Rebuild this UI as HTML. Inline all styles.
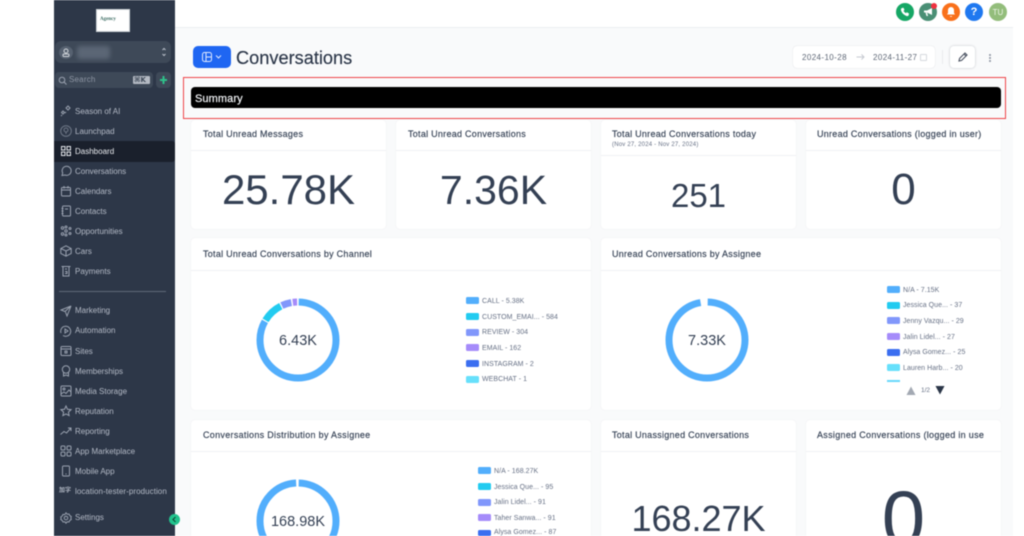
<!DOCTYPE html>
<html lang="en"><head><meta charset="utf-8"><title>Conversations</title>
<style>
*{box-sizing:border-box}
html,body{margin:0;padding:0;width:1024px;height:536px;overflow:hidden;background:#fff;font-family:"Liberation Sans",sans-serif}
#w{position:absolute;left:0;top:0;width:1024px;height:536px;overflow:hidden;filter:blur(.45px);background:#fff}
.a{position:absolute}
.t{position:absolute;white-space:nowrap}
.nav{position:absolute;left:75px;margin-top:1px;font-size:8px;line-height:10px;color:#b4bac6;letter-spacing:0;white-space:nowrap}
.ic{position:absolute;left:60px;width:12px;height:12px;fill:none;stroke:#9aa2b0;stroke-width:1}
.card{position:absolute;background:#fff;border-radius:4px;box-shadow:0 0 1px rgba(16,24,40,.1);overflow:hidden}
.hd{position:absolute;left:12px;font-size:9px;line-height:11px;font-weight:400;color:#344054;letter-spacing:.27px;white-space:nowrap;-webkit-text-stroke:.15px #344054}
.ln{position:absolute;left:0;right:0;height:1px;background:#f0f1f4}
.big{position:absolute;left:0;right:0;text-align:center;color:#344054;white-space:nowrap}
.lg{position:absolute;margin-top:1px;font-size:7px;line-height:9px;color:#667085;letter-spacing:.05px;white-space:nowrap}
.sw{position:absolute;width:13px;height:7px;border-radius:1.5px}
.dot{position:absolute;top:3px;width:18px;height:18px;border-radius:50%}
</style></head><body><div id="w">

<div class="a" style="left:175px;top:0;width:838px;height:536px;background:#f9fafb"></div>
<div class="a" style="left:175px;top:0;width:838px;height:28px;background:#fff;border-bottom:1px solid #eceef1"></div>

<!-- sidebar -->
<div class="a" style="left:54px;top:0;width:121px;height:536px;background:#2d3748"></div>
<div class="a" style="left:96px;top:9px;width:34px;height:23px;background:#fff;border:1px solid #cfd3d8"></div>
<div class="t" style="left:100px;top:16px;font:bold 5px/7px 'Liberation Serif',serif;color:#3b6b62">Agency</div>
<div class="a" style="left:55px;top:41px;width:116px;height:22px;border-radius:6px;background:#3e4958"></div>
<div class="a" style="left:59px;top:46px;width:14px;height:13px;border-radius:50%;background:#566170"></div>
<svg class="a" style="left:61px;top:47px" width="10" height="11" viewBox="0 0 10 11" fill="none" stroke="#d3d7dc" stroke-width="1"><circle cx="5" cy="4" r="2"/><rect x="2" y="7" width="6" height="2.5" rx="1"/></svg>
<div class="a" style="left:77px;top:46px;width:33px;height:13px;border-radius:3px;background:#5b6675;filter:blur(2px)"></div>
<svg class="a" style="left:160px;top:46px" width="8" height="12" viewBox="0 0 8 12" fill="none" stroke="#b9bfc9"><path d="M2.500 4L4 2.500 5.500 4M2.500 8L4 9.500 5.500 8"/></svg>
<div class="a" style="left:55px;top:72px;width:98px;height:16px;border-radius:4px;background:#3e4958"></div>
<svg class="a" style="left:58px;top:76px" width="9" height="9" viewBox="0 0 9 9" fill="none" stroke="#9aa2b0"><circle cx="4" cy="4" r="2.800"/><path d="M6 6l2.500 2.500"/></svg>
<div class="t" style="left:69px;top:75px;font-size:8px;line-height:10px;color:#8d95a3;letter-spacing:.2px">Search</div>
<div class="a" style="left:133px;top:76px;width:17px;height:8px;border-radius:1px;background:#b4bac3"></div>
<div class="t" style="left:134px;top:76px;font:bold 7px/8px 'DejaVu Sans',sans-serif;color:#3e4958">⌘K</div>
<div class="a" style="left:156px;top:72px;width:15px;height:16px;border-radius:4px;background:#3e4958"></div>
<svg class="a" style="left:159px;top:76px" width="9" height="8" viewBox="0 0 9 8"><path d="M3.500 0h2v3H8v2H5.500v3h-2V5H1V3h2.500z" fill="#2fc08a"/></svg>

<div class="a" style="left:54px;top:141px;width:121px;height:21px;background:#1a202c;border-radius:0 3px 3px 0"></div>

<svg class="ic" style="top:105px" viewBox="0 0 12 12"><path d="M8 1l2 2-2 2-2-2zM3 6l1.500 1.500L3 9 1.500 7.500zM1 11l1-1M6 7l-1 1"/></svg><div class="nav" style="top:106px">Season of AI</div>
<svg class="ic" style="top:125px;opacity:.6" viewBox="0 0 12 12"><circle cx="6" cy="6" r="5.300"/><circle cx="6" cy="5" r="2"/><path d="M6 7v2"/></svg><div class="nav" style="top:126px">Launchpad</div>
<svg class="ic" style="top:145px;stroke:#e2e5ea" viewBox="0 0 12 12"><rect x="1.500" y="1.500" width="3.500" height="3.500"/><rect x="7" y="1.500" width="3.500" height="3.500"/><rect x="1.500" y="7" width="3.500" height="3.500"/><rect x="7" y="7" width="3.500" height="3.500"/></svg><div class="nav" style="top:146px;color:#e8eaee">Dashboard</div>
<svg class="ic" style="top:165px" viewBox="0 0 12 12"><path d="M2 10.500l.7-2.500A4.500 4.500 0 1 1 5 10z"/></svg><div class="nav" style="top:166px">Conversations</div>
<svg class="ic" style="top:185px" viewBox="0 0 12 12"><rect x="1.500" y="2.500" width="9" height="8.500" rx="1"/><path d="M1.500 5h9M4 1v2.500M8 1v2.500"/></svg><div class="nav" style="top:186px">Calendars</div>
<svg class="ic" style="top:205px" viewBox="0 0 12 12"><rect x="2.500" y="1" width="8" height="10" rx="1"/><path d="M1.500 3.500h2M1.500 6h2M1.500 8.500h2M5 4h3"/></svg><div class="nav" style="top:206px">Contacts</div>
<svg class="ic" style="top:225px" viewBox="0 0 12 12"><circle cx="2.500" cy="3" r="1.200"/><circle cx="6" cy="6" r="1.200"/><circle cx="2.500" cy="9" r="1.200"/><circle cx="6" cy="2" r="1"/><circle cx="6" cy="10" r="1"/><circle cx="10" cy="3.500" r="1"/><circle cx="10" cy="8.500" r="1"/></svg><div class="nav" style="top:226px">Opportunities</div>
<svg class="ic" style="top:245px" viewBox="0 0 12 12"><path d="M6 .8l5.200 2.700v5L6 11.200.8 8.500v-5zM.8 3.500L6 6l5.200-2.500M6 6v5.200"/></svg><div class="nav" style="top:246px">Cars</div>
<svg class="ic" style="top:265px" viewBox="0 0 12 12"><path d="M1.500 1.500h9M3 1.500V11h6V1.500M5 4h2M5 6.500h2v2H5"/></svg><div class="nav" style="top:266px">Payments</div>

<div class="a" style="left:59px;top:291px;width:107px;height:1px;background:#5f6978"></div>

<svg class="ic" style="top:305px" viewBox="0 0 12 12"><path d="M11 1L1 5l4 1.500L11 1 7 11 5.500 7"/></svg><div class="nav" style="top:305px">Marketing</div>
<svg class="ic" style="top:325px" viewBox="0 0 12 12"><path d="M1 8a5 5 0 1 1 2 2.500"/><path d="M5 4l3 2-3 2z"/></svg><div class="nav" style="top:325px">Automation</div>
<svg class="ic" style="top:345px" viewBox="0 0 12 12"><rect x="1" y="1.500" width="10" height="9" rx="1"/><path d="M1 4h10M5 6h2v2H5z"/></svg><div class="nav" style="top:346px">Sites</div>
<svg class="ic" style="top:365px" viewBox="0 0 12 12"><circle cx="6" cy="4.500" r="3.700"/><path d="M3.500 7.500V11L6 10l2.500 1V7.500"/></svg><div class="nav" style="top:366px">Memberships</div>
<svg class="ic" style="top:385px" viewBox="0 0 12 12"><rect x="1" y="1" width="10" height="10" rx="1"/><circle cx="4" cy="4" r="1"/><path d="M1 9l3-2 2 1.500L9 5l2 2"/></svg><div class="nav" style="top:386px">Media Storage</div>
<svg class="ic" style="top:405px" viewBox="0 0 12 12"><path d="M6 1l1.500 3.300 3.500.4-2.600 2.400.7 3.500L6 8.900l-3.100 1.700.7-3.500L1 4.700l3.500-.4z"/></svg><div class="nav" style="top:406px">Reputation</div>
<svg class="ic" style="top:425px" viewBox="0 0 12 12"><path d="M.5 9.500l3.500-3 2.500 1.500L11 3M8 3h3v3"/></svg><div class="nav" style="top:426px">Reporting</div>
<svg class="ic" style="top:445px" viewBox="0 0 12 12"><rect x="1" y="1" width="4" height="4" rx="1"/><rect x="7" y="1" width="4" height="4" rx="1"/><rect x="1" y="7" width="4" height="4" rx="1"/><rect x="7" y="7" width="4" height="4" rx="1"/></svg><div class="nav" style="top:446px">App Marketplace</div>
<svg class="ic" style="top:465px" viewBox="0 0 12 12"><rect x="2.500" y="1" width="7" height="10" rx="1"/><path d="M5.500 9h1"/></svg><div class="nav" style="top:466px">Mobile App</div>
<div class="t" style="left:59px;top:487px;font:bold 6px/8px 'Liberation Sans','Noto Sans CJK SC',sans-serif;color:#aeb5c1">加字</div><div class="nav" style="top:486px;letter-spacing:.06px">location-tester-production</div>
<svg class="ic" style="top:512px" viewBox="0 0 12 12"><circle cx="6" cy="6" r="1.800"/><path d="M6 .8l1.200 1.400 1.800-.2.800 1.600 1.500 1-.5 1.400.5 1.400-1.500 1-.8 1.600-1.800-.2L6 11.200l-1.200-1.400-1.800.2-.8-1.600-1.500-1 .5-1.400L.7 5l1.500-1L3 2.400l1.800.2z"/></svg><div class="nav" style="top:512px">Settings</div>
<div class="a" style="left:169px;top:514px;width:11px;height:11px;border-radius:50%;background:#22c38e"></div>
<svg class="a" style="left:171px;top:516px" width="7" height="7" viewBox="0 0 7 7" fill="none" stroke="#134e3a" stroke-width="1.200"><path d="M4.500 1L2 3.500 4.500 6"/></svg>

<!-- top icons -->
<div class="dot" style="left:896px;background:#16a765"></div>
<svg class="a" style="left:900px;top:7px" width="10" height="10" viewBox="0 0 10 10"><path d="M2 1l1.500-.3L4.500 3l-1 .8c.5 1 1.300 1.800 2.400 2.400l.9-1L9 6.500 8.700 8C8.500 9 7.500 9.300 6.500 9 3.800 8 1.800 6 1 3.300.8 2.300 1 1.300 2 1z" fill="#fff"/></svg>
<div class="dot" style="left:919px;background:#4a8f75"></div>
<svg class="a" style="left:923px;top:7px" width="11" height="10" viewBox="0 0 11 10"><path d="M1 3.500h3L9 1v7L4 5.500H1zM2.500 5.500L3.500 9H5L4.200 5.700" fill="#fff"/></svg>
<div class="a" style="left:931px;top:3px;width:6px;height:6px;border-radius:50%;background:#f0303f"></div>
<div class="dot" style="left:942px;background:#f9701a"></div>
<svg class="a" style="left:946px;top:6px" width="10" height="12" viewBox="0 0 10 12"><path d="M5 1a3 3 0 0 1 3 3v3l1 1.500H1L2 7V4a3 3 0 0 1 3-3zM4 10h2v.8H4z" fill="#fff"/></svg>
<div class="dot" style="left:965px;background:#1f78f0"></div>
<div class="t" style="left:965px;top:6px;width:18px;text-align:center;font:bold 11px/12px 'Liberation Sans',sans-serif;color:#fff">?</div>
<div class="dot" style="left:989px;background:#93bd7b"></div>
<div class="t" style="left:989px;top:8px;width:18px;text-align:center;font-size:8px;line-height:9px;color:#eef5e9">TU</div>

<!-- header -->
<div class="a" style="left:193px;top:46px;width:38px;height:22px;border-radius:5px;background:#1f66f2"></div>
<svg class="a" style="left:201px;top:51px" width="24" height="12" viewBox="0 0 24 12" fill="none" stroke="#dfe9ff" stroke-width="1"><rect x="1.500" y="1.500" width="9" height="9" rx="2"/><path d="M5 1.500v9M5 6h5.500M15 4.500l2.500 2.500L20 4.500"/></svg>
<div class="t" style="left:236px;top:47px;font-size:18.2px;line-height:22px;color:#2b3648;-webkit-text-stroke:.15px #2b3648">Conversations</div>

<div class="a" style="left:793px;top:46px;width:142px;height:22px;border-radius:4px;background:#fff;box-shadow:0 0 1px rgba(16,24,40,.2)"></div>
<div class="t" style="left:802px;top:53px;font-size:8px;line-height:10px;color:#5d6675;letter-spacing:.4px">2024-10-28</div>
<svg class="a" style="left:856px;top:53px" width="9" height="8" viewBox="0 0 9 8" fill="none" stroke="#c6cad1"><path d="M.5 4h7.500M5.500 1.500L8 4 5.500 6.500"/></svg>
<div class="t" style="left:873px;top:53px;font-size:8px;line-height:10px;color:#5d6675;letter-spacing:.4px">2024-11-27</div>
<div class="a" style="left:920px;top:54px;width:7px;height:7px;border:1px solid #d6d9de;border-radius:1px"></div>
<div class="a" style="left:942px;top:50px;width:1px;height:14px;background:#e9ebee"></div>
<div class="a" style="left:950px;top:46px;width:25px;height:22px;border-radius:4px;background:#fff;box-shadow:0 0 2px rgba(16,24,40,.25)"></div>
<svg class="a" style="left:957px;top:51px" width="12" height="12" viewBox="0 0 12 12" fill="none" stroke="#4a5261" stroke-width="1.100"><path d="M2 10l.6-2.600L8 2l2 2-5.400 5.400zM7 3l2 2"/></svg>
<div class="a" style="left:989px;top:54px;width:2px;height:2px;background:#8b92a0;border-radius:50%;box-shadow:0 3px 0 #8b92a0,0 6px 0 #8b92a0"></div>

<!-- summary -->
<div class="a" style="left:183px;top:77px;width:823px;height:42px;border:1.500px solid #ef4449"></div>
<div class="a" style="left:191px;top:87px;width:810px;height:21px;border-radius:4px;background:#000"></div>
<div class="t" style="left:195px;top:93px;font-size:11px;line-height:13px;color:#f2f4f7;letter-spacing:.1px;-webkit-text-stroke:.2px #f2f4f7">Summary</div>

<!-- row 1 -->
<div class="card" style="left:191px;top:120px;width:195px;height:109px"><div class="hd" style="top:8px;margin-top:.5px">Total Unread Messages</div><div class="ln" style="top:30px"></div><div class="big" style="top:45px;font-size:42px;line-height:50px">25.78K</div></div>
<div class="card" style="left:396px;top:120px;width:195px;height:109px"><div class="hd" style="top:8px;margin-top:.5px">Total Unread Conversations</div><div class="ln" style="top:30px"></div><div class="big" style="top:45px;font-size:41px;line-height:50px">7.36K</div></div>
<div class="card" style="left:601px;top:120px;width:195px;height:109px"><div class="hd" style="top:8px;left:11px;margin-top:.5px">Total Unread Conversations today</div><div class="t" style="left:11px;top:21px;font-size:6px;line-height:8px;color:#667085;letter-spacing:.2px">(Nov 27, 2024 - Nov 27, 2024)</div><div class="ln" style="top:35px"></div><div class="big" style="top:56px;font-size:33px;line-height:40px">251</div></div>
<div class="card" style="left:806px;top:120px;width:195px;height:109px"><div class="hd" style="top:8px;left:11px;margin-top:.5px;letter-spacing:.27px">Unread Conversations (logged in user)</div><div class="ln" style="top:30px"></div><div class="big" style="top:45px;font-size:44px;line-height:50px">0</div></div>

<!-- row 2 left -->
<div class="card" style="left:191px;top:238px;width:400px;height:172px"><div class="hd" style="top:11px;letter-spacing:.27px">Total Unread Conversations by Channel</div><div class="ln" style="top:32px"></div></div>
<svg class="a" style="left:250px;top:292px" width="96" height="96" viewBox="0 0 96 96" fill="none" stroke-width="7">
<g transform="rotate(-90 48 48)">
<circle cx="48" cy="48" r="38" pathLength="100" stroke="#52aefc" stroke-dasharray="82.900 17.100" stroke-dashoffset="-0.300"/>
<circle cx="48" cy="48" r="38" pathLength="100" stroke="#22cbf0" stroke-dasharray="8.800 91.200" stroke-dashoffset="-83.700"/>
<circle cx="48" cy="48" r="38" pathLength="100" stroke="#8197fb" stroke-dasharray="4.200 95.800" stroke-dashoffset="-93"/>
<circle cx="48" cy="48" r="38" pathLength="100" stroke="#a58bfa" stroke-dasharray="1.800 98.200" stroke-dashoffset="-97.800"/>
</g></svg>
<div class="t" style="left:258px;top:332px;width:80px;text-align:center;font-size:14.500px;line-height:18px;color:#344054">6.43K</div>
<div class="sw" style="left:466px;top:297px;background:#52aefc"></div><div class="lg" style="left:482px;top:296px">CALL - 5.38K</div>
<div class="sw" style="left:466px;top:313px;background:#22cbf0"></div><div class="lg" style="left:482px;top:312px">CUSTOM_EMAI... - 584</div>
<div class="sw" style="left:466px;top:329px;background:#8197fb"></div><div class="lg" style="left:482px;top:327px">REVIEW - 304</div>
<div class="sw" style="left:466px;top:344px;background:#a58bfa"></div><div class="lg" style="left:482px;top:343px">EMAIL - 162</div>
<div class="sw" style="left:466px;top:360px;background:#3b6ef0"></div><div class="lg" style="left:482px;top:359px">INSTAGRAM - 2</div>
<div class="sw" style="left:466px;top:376px;background:#67e0fb"></div><div class="lg" style="left:482px;top:374px">WEBCHAT - 1</div>

<!-- row 2 right -->
<div class="card" style="left:601px;top:238px;width:400px;height:172px"><div class="hd" style="top:11px;left:11px">Unread Conversations by Assignee</div><div class="ln" style="top:32px"></div></div>
<svg class="a" style="left:659px;top:292px" width="96" height="96" viewBox="0 0 96 96" fill="none" stroke-width="7">
<g transform="rotate(-90 48 48)"><circle cx="48" cy="48" r="38" pathLength="100" stroke="#52aefc" stroke-dasharray="97 3" stroke-dashoffset="-0.300"/></g></svg>
<div class="t" style="left:667px;top:332px;width:80px;text-align:center;font-size:14.500px;line-height:18px;color:#344054">7.33K</div>
<div class="sw" style="left:887px;top:286px;background:#52aefc"></div><div class="lg" style="left:903px;top:285px">N/A - 7.15K</div>
<div class="sw" style="left:887px;top:302px;background:#22cbf0"></div><div class="lg" style="left:903px;top:300px">Jessica Que... - 37</div>
<div class="sw" style="left:887px;top:317px;background:#8197fb"></div><div class="lg" style="left:903px;top:316px">Jenny Vazqu... - 29</div>
<div class="sw" style="left:887px;top:333px;background:#a58bfa"></div><div class="lg" style="left:903px;top:332px">Jalin Lidel... - 27</div>
<div class="sw" style="left:887px;top:349px;background:#3b6ef0"></div><div class="lg" style="left:903px;top:347px">Alysa Gomez... - 25</div>
<div class="sw" style="left:887px;top:364px;background:#67e0fb"></div><div class="lg" style="left:903px;top:363px">Lauren Harb... - 20</div>
<div class="a" style="left:887px;top:380px;width:13px;height:2px;background:#67d8fb"></div>
<svg class="a" style="left:906px;top:386px" width="10" height="9" viewBox="0 0 10 9"><path d="M5 .5L9.500 9H.5z" fill="#a3a9b3"/></svg>
<div class="t" style="left:921px;top:387px;font-size:6.500px;line-height:8px;color:#667085">1/2</div>
<svg class="a" style="left:935px;top:386px" width="10" height="9" viewBox="0 0 10 9"><path d="M.5 0h9L5 8.500z" fill="#2b3648"/></svg>

<!-- row 3 -->
<div class="card" style="left:191px;top:420px;width:400px;height:116px;border-radius:4px 4px 0 0"><div class="hd" style="top:10px;letter-spacing:.3px">Conversations Distribution by Assignee</div><div class="ln" style="top:31px"></div></div>
<svg class="a" style="left:250px;top:473px" width="96" height="63" viewBox="0 0 96 63" fill="none" stroke-width="7">
<g transform="rotate(-90 48 48)"><circle cx="48" cy="48" r="38" pathLength="100" stroke="#52aefc" stroke-dasharray="98.900 1.100" stroke-dashoffset="-0.300"/></g></svg>
<div class="t" style="left:248px;top:513px;width:100px;text-align:center;font-size:14.500px;line-height:18px;color:#344054">168.98K</div>
<div class="sw" style="left:478px;top:467px;background:#52aefc"></div><div class="lg" style="left:494px;top:466px">N/A - 168.27K</div>
<div class="sw" style="left:478px;top:483px;background:#22cbf0"></div><div class="lg" style="left:494px;top:482px">Jessica Que... - 95</div>
<div class="sw" style="left:478px;top:499px;background:#8197fb"></div><div class="lg" style="left:494px;top:497px">Jalin Lidel... - 91</div>
<div class="sw" style="left:478px;top:514px;background:#a58bfa"></div><div class="lg" style="left:494px;top:513px">Taher Sanwa... - 91</div>
<div class="sw" style="left:478px;top:530px;height:6px;background:#3b6ef0"></div><div class="lg" style="left:494px;top:528px;line-height:7px">Alysa Gomez... - 87</div>

<div class="card" style="left:601px;top:420px;width:195px;height:116px;border-radius:4px 4px 0 0"><div class="hd" style="top:10px;left:11px">Total Unassigned Conversations</div><div class="ln" style="top:31px"></div><div class="big" style="top:80px;font-size:36px;line-height:38px">168.27K</div></div>
<div class="card" style="left:806px;top:420px;width:195px;height:116px;border-radius:4px 4px 0 0"><div class="hd" style="top:10px;left:11px;letter-spacing:.3px">Assigned Conversations (logged in use</div><div class="ln" style="top:31px"></div><div class="big" style="top:58px;font-size:78px;line-height:80px">0</div></div>

</div></body></html>
